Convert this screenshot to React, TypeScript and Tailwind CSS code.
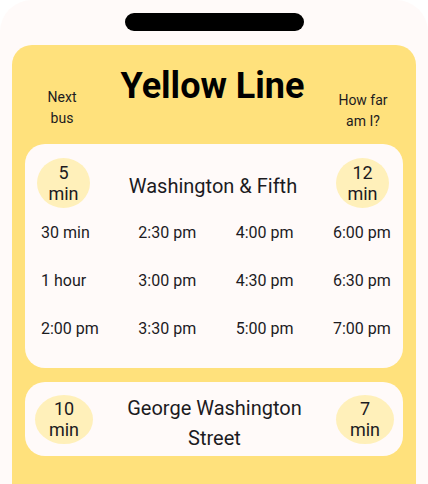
const SCHEDULE = [
  ["30 min", "1 hour", "2:00 pm"],
  ["2:30 pm", "3:00 pm", "3:30 pm"],
  ["4:00 pm", "4:30 pm", "5:00 pm"],
  ["6:00 pm", "6:30 pm", "7:00 pm"],
];

function Badge({ value, className }: { value: string; className: string }) {
  return (
    <div
      className={`shrink-0 rounded-[50%] bg-[#fff0ba] flex flex-col items-center justify-center text-[18px] leading-[21px] text-[#1c1b1f] ${className}`}
    >
      <span>{value}</span>
      <span>min</span>
    </div>
  );
}

export default function App() {
  return (
    <div
      className="w-[428px] h-[484px] bg-white overflow-hidden"
      style={{ fontFamily: "Roboto, 'Noto Sans', sans-serif" }}
    >
      <div className="h-full rounded-t-[32px] bg-[#fffaf9] pt-[13px] flex flex-col items-center">
        {/* notch */}
        <div className="w-[179px] h-[18px] rounded-full bg-black" />

        <div className="mt-[14px] self-stretch mx-[12px] flex-1 rounded-t-[20px] bg-[#ffe17c] px-[13px]">
          {/* header */}
          <div className="flex h-[99px] -mx-[13px] text-[#1c1b1f]">
            <div className="w-[100px] mt-[42px] text-center text-sm leading-[21px]">
              Next
              <br />
              bus
            </div>
            <h1 className="flex-1 mt-[20px] text-center text-[36px] font-bold leading-[1.172] text-black">
              Yellow Line
            </h1>
            <div className="w-[100px] mr-[3px] mt-[45px] text-center text-sm leading-[21px]">
              How far
              <br />
              am I?
            </div>
          </div>

          {/* first stop with timetable */}
          <div className="rounded-[20px] bg-[#fffaf9] pt-[14px] pb-[15px] text-[#1c1b1f]">
            <div className="flex items-center justify-between pl-[12px] pr-[14px]">
              <Badge value="5" className="w-[53px] h-[50px]" />
              <div className="pt-[6px] text-[20px] leading-[30px]">Washington &amp; Fifth</div>
              <Badge value="12" className="w-[53px] h-[50px]" />
            </div>
            <div className="mt-[1px] flex justify-between pl-[16px] pr-[12px] text-base">
              {SCHEDULE.map((col, i) => (
                <div key={i} className="flex flex-col w-[58px]">
                  {col.map((t) => (
                    <div key={t} className="h-[48px] flex items-center whitespace-nowrap">
                      {t}
                    </div>
                  ))}
                </div>
              ))}
            </div>
          </div>

          {/* second stop */}
          <div className="mt-[14px] h-[74px] rounded-[20px] bg-[#fffaf9] flex items-center justify-between pl-[10px] pr-[9px] text-[#1c1b1f]">
            <Badge value="10" className="w-[58px] h-[49px]" />
            <div className="pt-[7px] w-[200px] text-center text-[20px] leading-[30px]">
              George Washington Street
            </div>
            <Badge value="7" className="w-[58px] h-[49px]" />
          </div>
        </div>
      </div>
    </div>
  );
}
